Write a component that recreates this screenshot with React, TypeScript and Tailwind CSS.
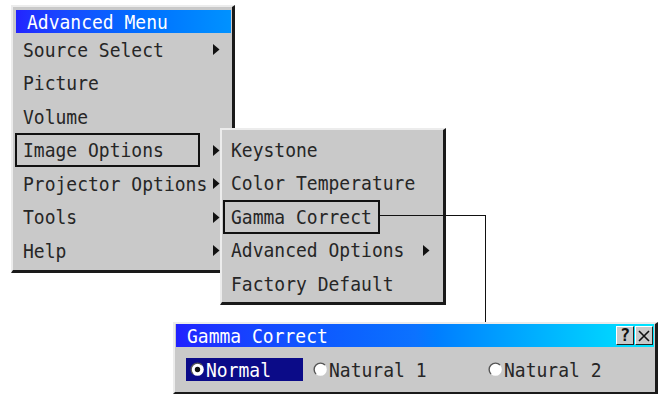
import React from "react";

const font = { fontFamily: '"DejaVu Sans Mono", "Liberation Mono", monospace' };

function Arrow() {
  return (
    <svg width="7" height="11" viewBox="0 0 7 11" className="shrink-0">
      <path d="M0 0 L6.5 5.5 L0 11 Z" fill="#111" />
    </svg>
  );
}

function Txt({ children, white }: { children: React.ReactNode; white?: boolean }) {
  return (
    <span
      className={
        "inline-block scale-y-110 whitespace-pre text-[18px] leading-none " +
        (white ? "text-white" : "text-[#262626]")
      }
    >
      {children}
    </span>
  );
}

function Row({
  label,
  arrow,
  selected,
  boxW,
  arrowGap,
}: {
  label: string;
  arrow?: boolean;
  selected?: boolean;
  boxW: number;
  arrowGap: number;
}) {
  return (
    <div className="flex h-[33.5px] items-center">
      <div
        className={
          "flex h-[34px] items-center border-2 pl-[6px] " +
          (selected ? "border-[#111]" : "border-transparent")
        }
        style={{ width: boxW }}
      >
        <Txt>{label}</Txt>
      </div>
      {arrow && (
        <div style={{ marginLeft: arrowGap }} className="flex items-center">
          <Arrow />
        </div>
      )}
    </div>
  );
}

function Radio({ checked }: { checked?: boolean }) {
  return (
    <svg width="15" height="15" viewBox="0 0 15 15" className="shrink-0">
      <circle cx="7.5" cy="7.5" r="6.3" fill="#fff" />
      <path d="M3 12 A6.3 6.3 0 0 1 12 3" fill="none" stroke="#555" strokeWidth="1.4" />
      {checked && <circle cx="7.5" cy="7.5" r="2.7" fill="#111" />}
    </svg>
  );
}

export default function App() {
  return (
    <div className="relative h-[395px] w-[668px] overflow-hidden bg-white" style={font}>
      {/* Main menu */}
      <div className="absolute left-[11px] top-[5px] h-[268px] w-[224px] border-b-[3px] border-l-2 border-r-[3px] border-t-2 border-b-[#1a1a1a] border-l-[#ececec] border-r-[#1a1a1a] border-t-[#ececec] bg-[#c9c9c9] pl-[2px] pr-[1px] pt-[3px]">
        <div className="ml-[1px] flex h-[23px] items-center bg-gradient-to-r from-[#2323ff] to-[#0092ff] pl-[11px]">
          <Txt white>Advanced Menu</Txt>
        </div>
        <Row label="Source Select" arrow boxW={185} arrowGap={13} />
        <Row label="Picture" boxW={185} arrowGap={13} />
        <Row label="Volume" boxW={185} arrowGap={13} />
        <Row label="Image Options" arrow selected boxW={185} arrowGap={13} />
        <Row label="Projector Options" arrow boxW={185} arrowGap={13} />
        <Row label="Tools" arrow boxW={185} arrowGap={13} />
        <Row label="Help" arrow boxW={185} arrowGap={13} />
      </div>

      {/* Sub menu */}
      <div className="absolute left-[220px] top-[128px] h-[177px] w-[226px] border-b-[3px] border-l-2 border-r-[3px] border-t-2 border-b-[#1a1a1a] border-l-[#ececec] border-r-[#1a1a1a] border-t-[#ececec] bg-[#c9c9c9] pl-[1px] pt-[3px]">
        <Row label="Keystone" boxW={157} arrowGap={43} />
        <Row label="Color Temperature" boxW={157} arrowGap={43} />
        <Row label="Gamma Correct" selected boxW={157} arrowGap={43} />
        <Row label="Advanced Options" arrow boxW={200} arrowGap={0} />
        <Row label="Factory Default" boxW={157} arrowGap={43} />
      </div>

      {/* Connector line */}
      <div className="absolute left-[380px] top-[215px] h-[1px] w-[106px] bg-[#111]" />
      <div className="absolute left-[485px] top-[215px] h-[107px] w-[1px] bg-[#111]" />

      {/* Dialog */}
      <div className="absolute left-[173px] top-[322px] h-[72px] w-[485px] border-b-2 border-l-2 border-r-[3px] border-t-2 border-b-[#1a1a1a] border-l-[#ececec] border-r-[#1a1a1a] border-t-[#ececec] bg-[#c9c9c9] pl-[1px] pr-[1px]">
        <div className="flex h-[23px] items-center bg-gradient-to-r from-[#2020ff] via-[#0c72ff] to-[#00e6ff] pl-[11px] pr-[1px]">
          <Txt white>Gamma Correct</Txt>
          <div className="ml-auto flex gap-[1px]">
            <div className="flex h-[19px] w-[18px] items-center justify-center border-b border-l border-r border-t border-b-[#222] border-l-white border-r-[#222] border-t-white bg-[#c9c9c9] text-[17px] font-bold leading-none text-[#111]">
              ?
            </div>
            <div className="flex h-[19px] w-[18px] items-center justify-center border-b border-l border-r border-t border-b-[#222] border-l-white border-r-[#222] border-t-white bg-[#c9c9c9]">
              <svg width="12" height="12" viewBox="0 0 12 12">
                <path d="M1 1 L11 11 M11 1 L1 11" stroke="#111" strokeWidth="1.6" />
              </svg>
            </div>
          </div>
        </div>
        <div className="flex h-[45px] items-center pl-[10px]">
          <div className="flex h-[23px] w-[117px] items-center gap-[1px] bg-[#0b0b88] pl-[4px]">
            <Radio checked />
            <Txt white>Normal</Txt>
          </div>
          <div className="ml-[10px] flex w-[175px] items-center gap-[1px]">
            <Radio />
            <Txt>Natural 1</Txt>
          </div>
          <div className="flex items-center gap-[1px]">
            <Radio />
            <Txt>Natural 2</Txt>
          </div>
        </div>
      </div>
    </div>
  );
}
